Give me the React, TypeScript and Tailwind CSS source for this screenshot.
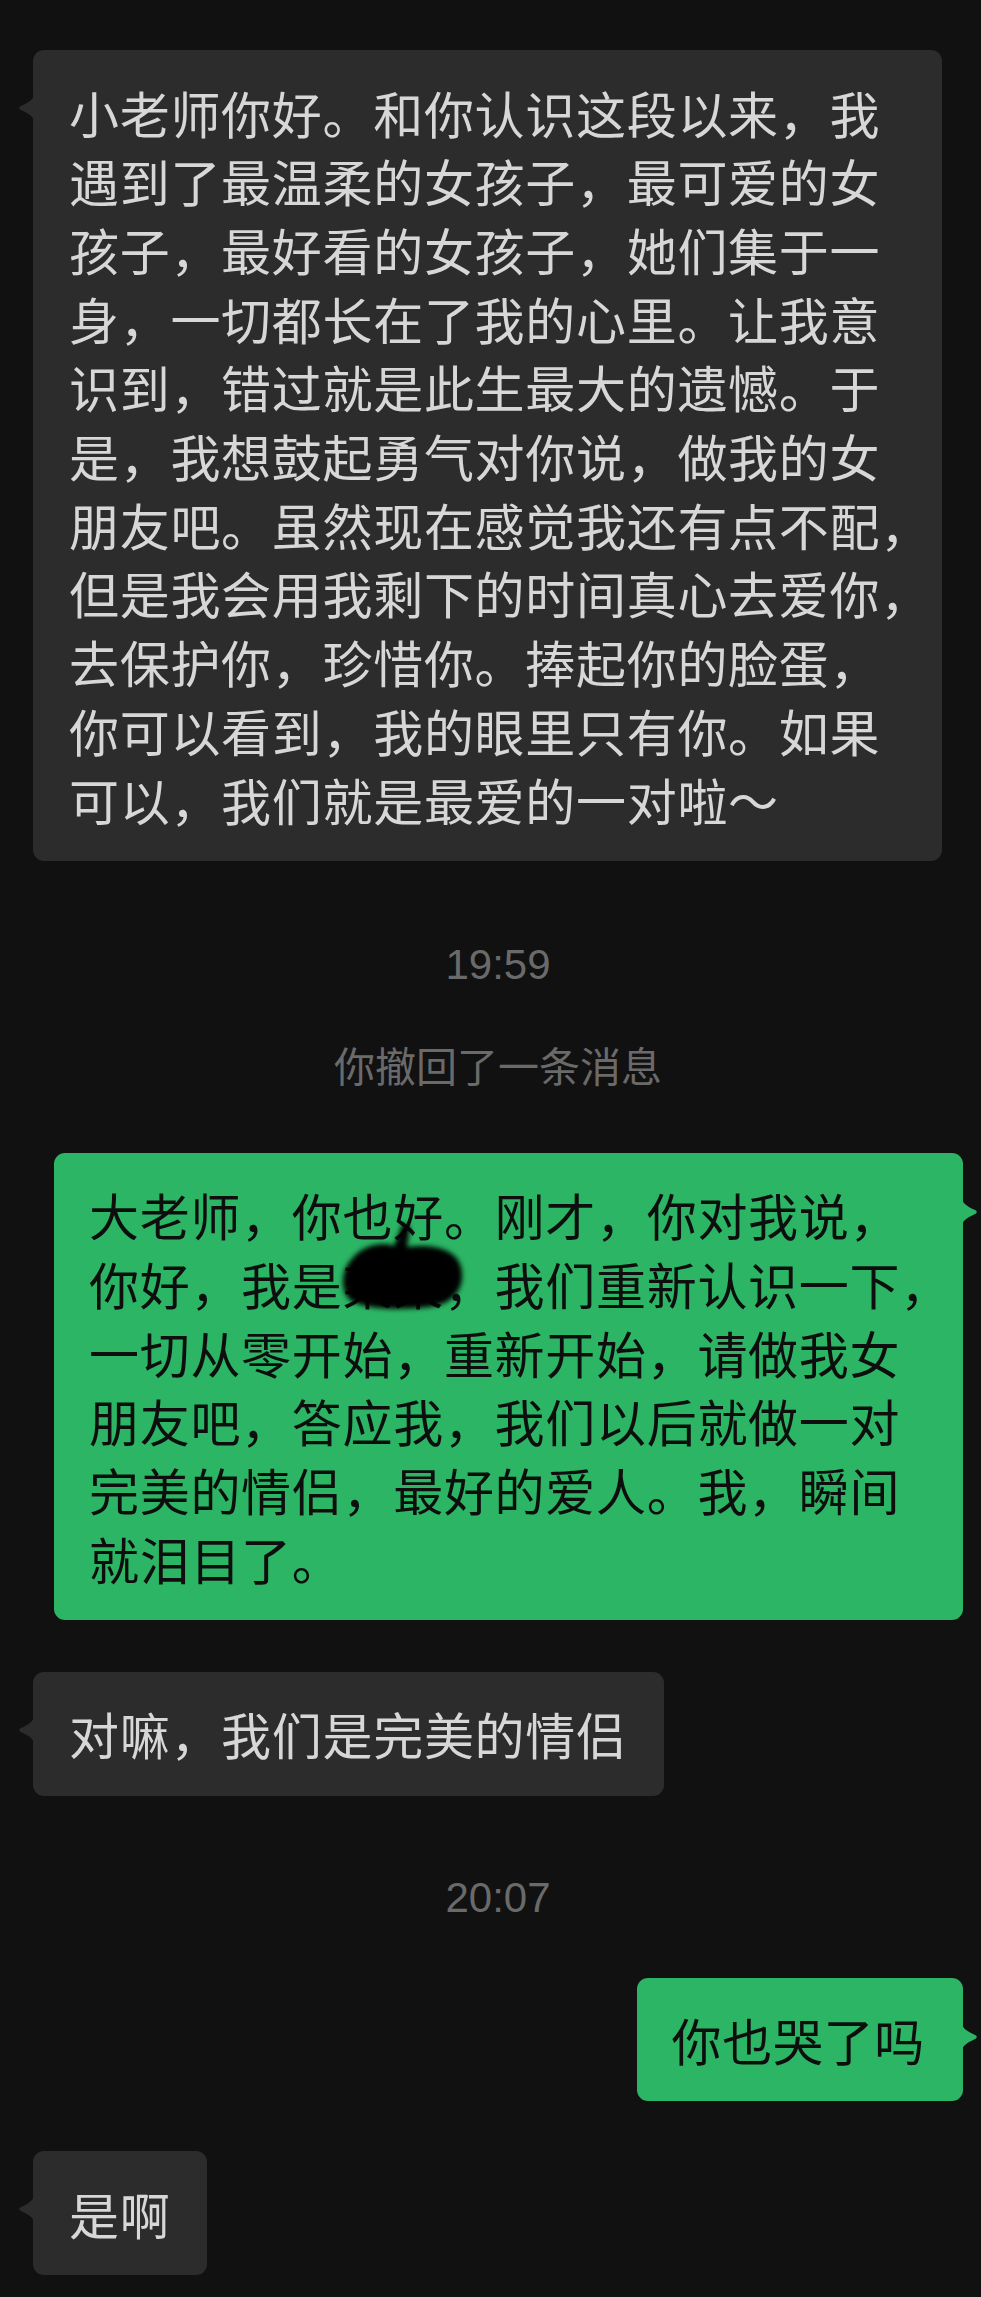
import React from "react";

type BubbleProps = {
  lines: React.ReactNode[];
  extra?: string;
  children?: React.ReactNode;
};

function Incoming({ lines, extra = "" }: BubbleProps) {
  return (
    <div
      className={`relative self-start ml-[33px] rounded-[11px] bg-[#2c2c2c] pl-[36px] pr-[37px] py-[27.5px] text-[50px] leading-[68.7px] tracking-[0.7px] text-[#d7d7d7] ${extra}`}
    >
      <svg
        className="absolute left-[-15px] top-[43px] h-[30px] w-[16px] fill-[#2c2c2c]"
        viewBox="0 0 16 30"
      >
        <path d="M16 0 C16 5 14 8 2.4 13.3 Q0 15 2.4 16.7 C14 22 16 25 16 30 Z" />
      </svg>
      {lines.map((l, i) => (
        <div key={i} className="whitespace-nowrap">
          {l}
        </div>
      ))}
    </div>
  );
}

function Outgoing({ lines, extra = "", children }: BubbleProps) {
  return (
    <div
      className={`relative self-end mr-[18px] rounded-[11px] bg-[#2bb564] pl-[35px] pr-[38px] py-[27.5px] text-[50px] leading-[68.7px] tracking-[0.7px] text-[#0e0e0e] ${extra}`}
    >
      <svg
        className="absolute right-[-15px] top-[44px] h-[30px] w-[16px] fill-[#2bb564]"
        viewBox="0 0 16 30"
      >
        <path d="M0 0 C0 5 2 8 13.6 13.3 Q16 15 13.6 16.7 C2 22 0 25 0 30 Z" />
      </svg>
      {lines.map((l, i) => (
        <div key={i} className="whitespace-nowrap">
          {l}
        </div>
      ))}
      {children}
    </div>
  );
}

function Stamp({ text, extra }: { text: string; extra: string }) {
  return (
    <div
      className={`pl-[15px] text-center font-['Liberation_Sans',sans-serif] text-[42px] leading-[48px] text-[#6a6a6a] ${extra}`}
    >
      {text}
    </div>
  );
}

export default function App() {
  const first = [
    "小老师你好。和你认识这段以来，我",
    "遇到了最温柔的女孩子，最可爱的女",
    "孩子，最好看的女孩子，她们集于一",
    "身，一切都长在了我的心里。让我意",
    "识到，错过就是此生最大的遗憾。于",
    "是，我想鼓起勇气对你说，做我的女",
    "朋友吧。虽然现在感觉我还有点不配，",
    "但是我会用我剩下的时间真心去爱你，",
    "去保护你，珍惜你。捧起你的脸蛋，",
    "你可以看到，我的眼里只有你。如果",
    "可以，我们就是最爱的一对啦～",
  ];
  const second = [
    "大老师，你也好。刚才，你对我说，",
    "你好，我是某某，我们重新认识一下，",
    "一切从零开始，重新开始，请做我女",
    "朋友吧，答应我，我们以后就做一对",
    "完美的情侣，最好的爱人。我，瞬间",
    "就泪目了。",
  ];
  return (
    <div className="flex min-h-screen w-full flex-col bg-[#111111] pt-[50px] pb-[21px] font-['Noto_Sans_CJK_SC','Noto_Sans',sans-serif]">
      <Incoming lines={first} extra="w-[909px]" />

      <Stamp text="19:59" extra="mt-[80px]" />
      <div className="mt-[51px] pl-[15px] text-center text-[41px] leading-[48px] text-[#6a6a6a]">
        你撤回了一条消息
      </div>

      <Outgoing lines={second} extra="mt-[65px] w-[909px]">
        <svg
          className="pointer-events-none absolute left-[278px] top-[64px] h-[100px] w-[142px]"
          viewBox="0 0 142 100"
        >
          <defs>
            <filter id="blur" x="-20%" y="-20%" width="140%" height="140%">
              <feGaussianBlur stdDeviation="2.6" />
            </filter>
          </defs>
          <path
            filter="url(#blur)"
            fill="#050505"
            d="M20 42 C 30 28, 52 24, 62 29 L 71 6 L 78 9 L 75 30 C 96 27, 124 30, 129 50 C 134 70, 122 88, 96 90 C 72 93, 32 93, 18 83 C 8 73, 9 53, 20 42 Z"
          />
        </svg>
      </Outgoing>

      <Incoming lines={["对嘛，我们是完美的情侣"]} extra="mt-[52px]" />

      <Stamp text="20:07" extra="mt-[78px]" />

      <Outgoing lines={["你也哭了吗"]} extra="mt-[56px]" />

      <Incoming lines={["是啊"]} extra="mt-[50px]" />
    </div>
  );
}
